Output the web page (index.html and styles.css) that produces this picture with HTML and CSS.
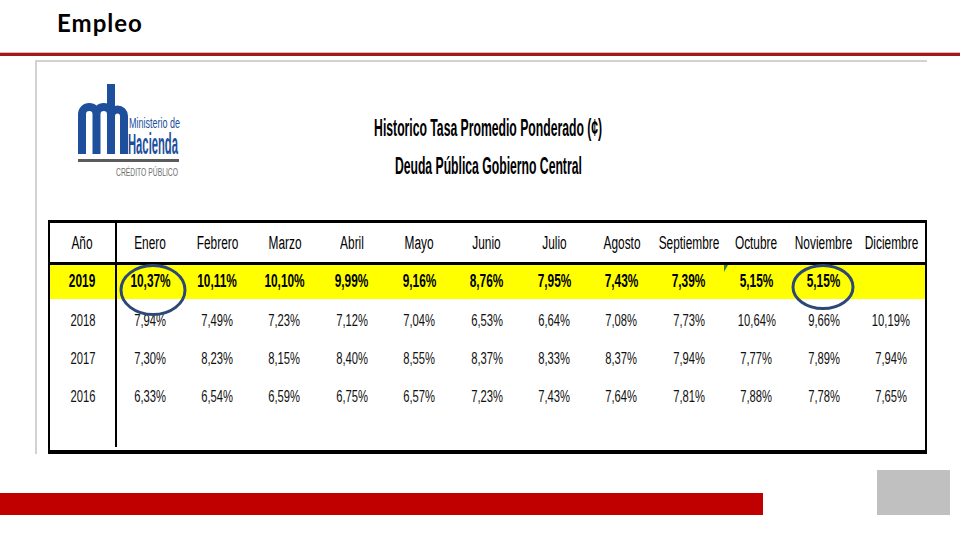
FILE: index.html
```html
<!DOCTYPE html>
<html lang="es">
<head>
<meta charset="utf-8">
<title>Empleo</title>
<link rel="stylesheet" href="styles.css">
</head>
<body>
<div class="slide">
  <header class="top">
    <h1 class="title">Empleo</h1>
  </header>
  <div class="rule"></div>

  <section class="frame">
    <div class="intro">
      <svg class="logo" width="104" height="94" viewBox="0 0 104 94" aria-label="Ministerio de Hacienda">
        <g fill="none" stroke="#1d4f9c" stroke-width="8">
          <path d="M4 70 V30.25 A7.25 7.25 0 0 1 18.5 30.25 V70 M18.5 30.25 A7.25 7.25 0 0 1 33 30.25"/>
          <path d="M33 70 V0 M33 32 A6.5 6.5 0 0 1 46 32 V70"/>
        </g>
        <text x="51" y="44" class="lg-min" textLength="51" lengthAdjust="spacingAndGlyphs">Ministerio de</text>
        <text x="50" y="70" class="lg-hac" textLength="50" lengthAdjust="spacingAndGlyphs">Hacienda</text>
        <rect x="0" y="75" width="101" height="3" fill="#5b5b5b"/>
        <text x="38" y="92" class="lg-cp" textLength="62" lengthAdjust="spacingAndGlyphs">CRÉDITO PÚBLICO</text>
      </svg>
      <div class="headings">
        <p class="h-line"><span>Historico Tasa Promedio Ponderado (¢)</span></p>
        <p class="h-line"><span>Deuda Pública Gobierno Central</span></p>
      </div>
    </div>

    <div class="sheet">
      <table class="rates">
        <colgroup>
          <col class="c-year">
          <col span="12">
        </colgroup>
        <thead>
          <tr class="r-head">
            <th class="year"><span>Año</span></th>
            <th><span>Enero</span></th><th><span>Febrero</span></th><th><span>Marzo</span></th><th><span>Abril</span></th><th><span>Mayo</span></th><th><span>Junio</span></th>
            <th><span>Julio</span></th><th><span>Agosto</span></th><th><span>Septiembre</span></th><th><span>Octubre</span></th><th><span>Noviembre</span></th><th><span>Diciembre</span></th>
          </tr>
        </thead>
        <tbody>
          <tr class="r-now">
            <td class="year"><span>2019</span></td>
            <td><span>10,37%</span></td><td><span>10,11%</span></td><td><span>10,10%</span></td><td><span>9,99%</span></td><td><span>9,16%</span></td><td><span>8,76%</span></td>
            <td><span>7,95%</span></td><td><span>7,43%</span></td><td><span>7,39%</span></td><td class="flagged"><span>5,15%</span></td><td><span>5,15%</span></td><td></td>
          </tr>
          <tr class="r-data">
            <td class="year"><span>2018</span></td>
            <td><span>7,94%</span></td><td><span>7,49%</span></td><td><span>7,23%</span></td><td><span>7,12%</span></td><td><span>7,04%</span></td><td><span>6,53%</span></td>
            <td><span>6,64%</span></td><td><span>7,08%</span></td><td><span>7,73%</span></td><td><span>10,64%</span></td><td><span>9,66%</span></td><td><span>10,19%</span></td>
          </tr>
          <tr class="r-data">
            <td class="year"><span>2017</span></td>
            <td><span>7,30%</span></td><td><span>8,23%</span></td><td><span>8,15%</span></td><td><span>8,40%</span></td><td><span>8,55%</span></td><td><span>8,37%</span></td>
            <td><span>8,33%</span></td><td><span>8,37%</span></td><td><span>7,94%</span></td><td><span>7,77%</span></td><td><span>7,89%</span></td><td><span>7,94%</span></td>
          </tr>
          <tr class="r-data">
            <td class="year"><span>2016</span></td>
            <td><span>6,33%</span></td><td><span>6,54%</span></td><td><span>6,59%</span></td><td><span>6,75%</span></td><td><span>6,57%</span></td><td><span>7,23%</span></td>
            <td><span>7,43%</span></td><td><span>7,64%</span></td><td><span>7,81%</span></td><td><span>7,88%</span></td><td><span>7,78%</span></td><td><span>7,65%</span></td>
          </tr>
          <tr class="r-fill">
            <td class="year"></td><td colspan="12"></td>
          </tr>
        </tbody>
      </table>
      <svg class="mark mark-jan" width="70" height="54" viewBox="0 0 70 54"><ellipse cx="35" cy="27" rx="32" ry="24.5" fill="none" stroke="#2d4877" stroke-width="3"/></svg>
      <svg class="mark mark-nov" width="66" height="48" viewBox="0 0 66 48"><ellipse cx="33" cy="24" rx="30" ry="21.5" fill="none" stroke="#2d4877" stroke-width="3"/></svg>
    </div>
  </section>

  <footer class="bottom">
    <div class="band"></div>
    <div class="square"></div>
  </footer>
</div>
</body>
</html>
```

FILE: styles.css
```css
* { box-sizing: border-box; }

html, body {
  margin: 0;
  padding: 0;
  background: #ffffff;
}

body {
  width: 960px;
  height: 540px;
  overflow: hidden;
  font-family: "Liberation Sans", Arial, sans-serif;
  color: #000;
}

.slide {
  width: 960px;
  height: 540px;
  display: flex;
  flex-direction: column;
}

.top {
  height: 53px;
  padding-left: 57px;
  padding-top: 8px;
}

.title {
  margin: 0;
  font-family: "Lato", "Open Sans", sans-serif;
  font-weight: 700;
  font-size: 24px;
  line-height: 30px;
  letter-spacing: 1px;
  color: #000;
}

.rule {
  height: 3px;
  background: #a0191b;
  box-shadow: 0 -1px 0 #e7b7b7;
}

.frame {
  margin: 4px 33px 0 35px;
  border-top: 2px solid #d2d2d2;
  border-left: 2px solid #d2d2d2;
  display: flex;
  flex-direction: column;
}

.intro {
  height: 158px;
  display: flex;
  align-items: flex-start;
}

.logo {
  margin-left: 41px;
  margin-top: 22px;
  flex: none;
  overflow: visible;
}

.lg-min {
  font-family: "Liberation Sans", sans-serif;
  font-size: 15px;
  fill: #1d4f9c;
}

.lg-hac {
  font-family: "Liberation Sans", sans-serif;
  font-weight: 700;
  font-size: 29px;
  fill: #1d4f9c;
}

.lg-cp {
  font-family: "Liberation Sans", sans-serif;
  font-size: 11px;
  fill: #707070;
}

.headings {
  width: 600px;
  margin-left: 6px;
  padding-top: 47px;
  text-align: center;
}

.h-line {
  margin: 0;
  font-weight: 700;
  font-size: 23px;
  line-height: 38px;
  white-space: nowrap;
}

.h-line span {
  display: inline-block;
  transform: scaleX(0.53);
}

.sheet {
  position: relative;
  margin-left: 11px;
  width: 879px;
  height: 234px;
  border-top: 3px solid #000;
  border-right: 2px solid #000;
  border-bottom: 4px solid #000;
  border-left: 2px solid #000;
}

.rates {
  width: 100%;
  border-collapse: collapse;
  table-layout: fixed;
}

.c-year { width: 66px; }

.rates th,
.rates td {
  padding: 0;
  text-align: center;
  white-space: nowrap;
  font-weight: 400;
}

.rates span {
  display: inline-block;
  margin: 0 -20px;
  transform: scaleX(0.66);
}

.rates .year {
  border-right: 2px solid #000;
}

.r-head th {
  height: 40px;
  font-size: 18px;
  border-bottom: 3px solid #000;
  padding-top: 2px;
}

.r-now td {
  height: 36px;
  background: #ffff00;
  font-weight: 700;
  font-size: 18px;
}

.r-data td {
  height: 38px;
  font-size: 17px;
  padding-top: 6px;
  color: #111;
}

.r-fill td {
  height: 34px;
}

.flagged {
  position: relative;
}

.flagged::before {
  content: "";
  position: absolute;
  left: 1px;
  top: 0;
  border-top: 7px solid #2f8a2f;
  border-right: 4px solid transparent;
}

.mark {
  position: absolute;
  pointer-events: none;
}

.mark-jan {
  left: 68px;
  top: 40px;
}

.mark-nov {
  left: 740px;
  top: 40px;
}

.bottom {
  flex: 1;
  display: flex;
  align-items: flex-start;
  justify-content: space-between;
  padding-top: 16px;
  padding-right: 10px;
}

.band {
  width: 763px;
  height: 22px;
  margin-top: 23px;
  background: #c00000;
}

.square {
  width: 73px;
  height: 45px;
  background: #c0c0c0;
}
```
